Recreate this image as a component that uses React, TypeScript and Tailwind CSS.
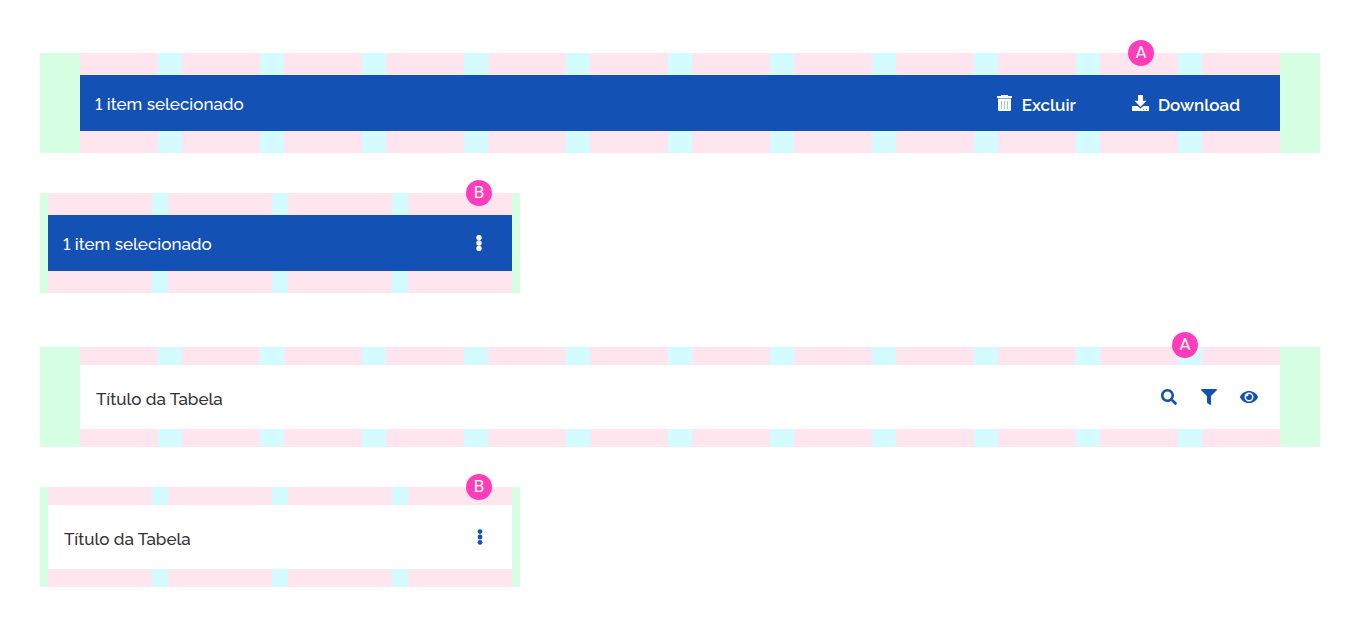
import type { ReactNode } from "react";
import { FaSearch, FaFilter, FaEye } from "react-icons/fa";

type Size = "desktop" | "mobile";

const layouts = {
  desktop: { count: 12, frame: "w-full", margin: "px-10", gap: "gap-6" },
  mobile: { count: 4, frame: "w-full max-w-[480px]", margin: "px-2", gap: "gap-4" },
};

function Badge({ label, place }: { label: string; place: string }) {
  return (
    <span
      className={`absolute z-10 flex size-[26px] items-center justify-center rounded-full bg-[#ff3dbb] pb-0.5 font-['Roboto',sans-serif] text-[17px] leading-none text-white ${place}`}
    >
      {label}
    </span>
  );
}

function GridFrame({ size, badge, place, children }: { size: Size; badge: string; place: string; children: ReactNode }) {
  const layout = layouts[size];
  return (
    <section className={`relative grid min-h-[100px] bg-[#d7ffe3] ${layout.frame} ${layout.margin}`}>
      <div aria-hidden="true" className={`col-start-1 row-start-1 flex bg-[#d4fbff] ${layout.gap}`}>
        {Array.from({ length: layout.count }, (_, i) => (
          <div key={i} className="flex-1 bg-[#ffe5ee]" />
        ))}
      </div>
      <div className="col-start-1 row-start-1 self-center">{children}</div>
      <Badge label={badge} place={place} />
    </section>
  );
}

function TrashIcon() {
  return (
    <svg viewBox="0 0 16 16" className="size-4" fill="currentColor" aria-hidden="true">
      <path d="M4.300 0h6.400l.5 1H15v2H0V1h3.800z" />
      <path d="M1 3.600h13V15a1 1 0 0 1-1 1H2a1 1 0 0 1-1-1z" />
      <path d="M4 6h1v8H4zM7 6h1v8H7zM10 6h1v8h-1z" fill="#a9c0e6" />
    </svg>
  );
}

function DownloadIcon() {
  return (
    <svg viewBox="0 0 17 16" className="h-4 w-[17px]" fill="currentColor" aria-hidden="true">
      <path d="M6 0h5v5.800h3.500L8.500 12l-6-6.200H6z" />
      <path d="M.5 11h4.900l3.100 2.600 3.100-2.600h4.900a.5.5 0 0 1 .5.5v4a.5.5 0 0 1-.5.5H.5a.5.5 0 0 1-.5-.5v-4a.5.5 0 0 1 .5-.5z" />
      <path d="M11 14h1v1h-1zM14 14h1v1h-1z" fill="#7f9fd6" />
    </svg>
  );
}

function DotsIcon({ radius }: { radius: number }) {
  return (
    <svg viewBox="0 0 16 16" className="size-4" fill="currentColor" aria-hidden="true">
      <circle cx="8" cy="2.600" r={radius} />
      <circle cx="8" cy="8" r={radius} />
      <circle cx="8" cy="13.400" r={radius} />
    </svg>
  );
}

function SelectionBar({ children }: { children: ReactNode }) {
  return (
    <div className="flex h-14 items-center justify-between bg-[#1351b4] pl-[15px] text-white">
      <p className="pt-0.5 text-[17px] leading-6 font-medium lining-nums">1 item selecionado</p>
      {children}
    </div>
  );
}

function TitleBar({ children }: { children: ReactNode }) {
  return (
    <div className="flex h-16 items-center justify-between bg-white pl-4">
      <h2 className="pt-1 text-[17px] leading-6 font-medium text-[#333333]">Título da Tabela</h2>
      {children}
    </div>
  );
}

export default function App() {
  return (
    <main className="flex flex-col bg-white px-10 pt-[53px] pb-10 font-['Raleway','Lato',sans-serif]">
      <GridFrame size="desktop" badge="A" place="-top-[13px] right-[166px]">
        <SelectionBar>
          <div className="flex items-center gap-14 pr-10 text-[17px] leading-6 font-semibold">
            <button type="button" className="flex items-center gap-[9px]">
              <TrashIcon />
              <span className="pt-1">Excluir</span>
            </button>
            <button type="button" className="flex items-center gap-[9px]">
              <DownloadIcon />
              <span className="pt-1">Download</span>
            </button>
          </div>
        </SelectionBar>
      </GridFrame>

      <div className="mt-10">
        <GridFrame size="mobile" badge="B" place="-top-[13px] right-7">
          <SelectionBar>
            <button type="button" aria-label="Mais ações" className="mr-[21px] flex size-6 items-center justify-center">
              <DotsIcon radius={2.7} />
            </button>
          </SelectionBar>
        </GridFrame>
      </div>

      <div className="mt-[54px]">
        <GridFrame size="desktop" badge="A" place="-top-[15px] right-[122px]">
          <TitleBar>
            <div className="flex gap-4 pr-[19px] text-[#1351b4]">
              <button type="button" aria-label="Buscar" className="flex size-6 items-center justify-center">
                <FaSearch className="size-4" />
              </button>
              <button type="button" aria-label="Filtrar" className="flex size-6 items-center justify-center">
                <FaFilter className="size-4" />
              </button>
              <button type="button" aria-label="Visualizar" className="flex size-6 items-center justify-center">
                <FaEye className="size-[18px]" />
              </button>
            </div>
          </TitleBar>
        </GridFrame>
      </div>

      <div className="mt-10">
        <GridFrame size="mobile" badge="B" place="-top-[13px] right-7">
          <TitleBar>
            <button type="button" aria-label="Mais opções" className="mr-5 flex size-6 items-center justify-center text-[#1351b4]">
              <DotsIcon radius={2.4} />
            </button>
          </TitleBar>
        </GridFrame>
      </div>
    </main>
  );
}
